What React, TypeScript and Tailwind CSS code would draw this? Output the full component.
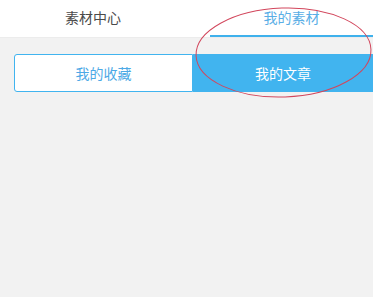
import React from "react";

export default function App() {
  return (
    <div
      className="relative w-[373px] h-[297px] overflow-hidden bg-[#f2f2f2]"
      style={{ fontFamily: '"Noto Sans CJK SC", "Noto Sans", sans-serif' }}
    >
      <div className="flex h-[38px] bg-white border-b border-[#ececec]">
        <div className="w-[186px] flex items-center justify-center pb-[2px] text-[14px] text-[#4a4a4a]">
          素材中心
        </div>
        <div className="flex-1 ml-[24px] flex items-center justify-center pb-[1px] text-[14px] text-[#5aaee6] border-b-2 border-[#3fb1ec]">
          我的素材
        </div>
      </div>
      <div className="flex pl-[14px] pt-[16px]">
        <div className="w-[179px] h-[38px] flex items-center justify-center bg-white border border-[#41b4ef] rounded-l-[3px] text-[14px] text-[#4ca9e6]">
          我的收藏
        </div>
        <div className="flex-1 h-[38px] flex items-center justify-center bg-[#41b4ef] text-[14px] text-white">
          我的文章
        </div>
      </div>
      <svg
        className="absolute left-0 top-0 pointer-events-none"
        width="373"
        height="297"
        viewBox="0 0 373 297"
      >
        <ellipse
          cx="283.5"
          cy="52.5"
          rx="87.5"
          ry="44.5"
          fill="none"
          stroke="#d2465c"
          strokeWidth="1"
          transform="rotate(-2 283.5 52.5)"
        />
      </svg>
    </div>
  );
}
